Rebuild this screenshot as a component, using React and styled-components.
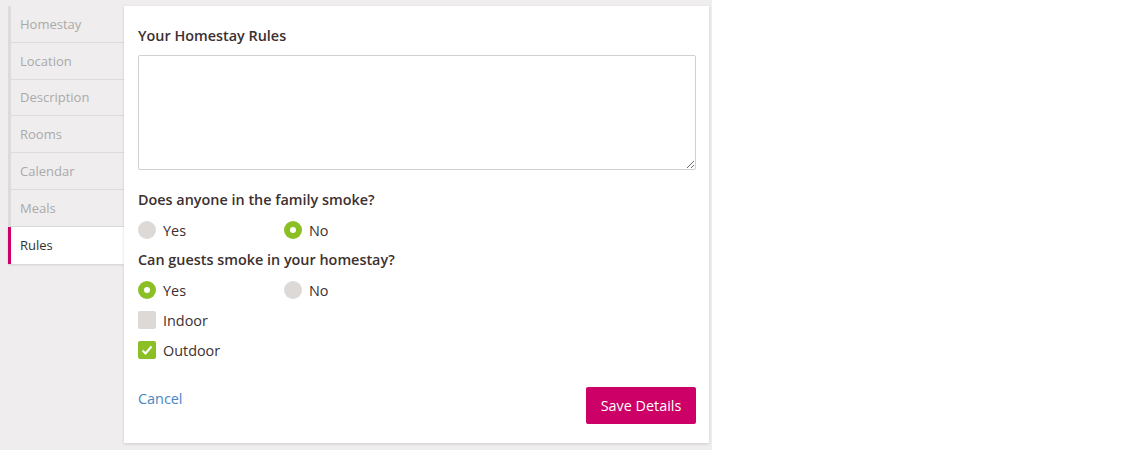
import styled, { createGlobalStyle } from "styled-components";

const GlobalStyle = createGlobalStyle`
  html, body {
    margin: 0;
    padding: 0;
    background: #fff;
    font-family: "Open Sans", "Liberation Sans", sans-serif;
  }
`;

const Page = styled.div`
  width: 712px;
  height: 450px;
  background: #efeded;
  box-sizing: border-box;
  padding: 6px 0 0 8px;
  display: flex;
  align-items: flex-start;
`;

const Tabs = styled.nav`
  width: 116px;
  display: flex;
  flex-direction: column;
`;

const Tab = styled.div`
  height: 36.8px;
  box-sizing: border-box;
  display: flex;
  align-items: center;
  padding-left: 9px;
  font-size: 13px;
  color: ${(p) => (p.$active ? "#333" : "#aaa")};
  background: ${(p) => (p.$active ? "#fff" : "#efeded")};
  border-left: 3px solid ${(p) => (p.$active ? "#cc0066" : "#dcdcdc")};
  border-bottom: ${(p) => (p.$active ? "none" : "1px solid #dcdcdc")};
  box-shadow: ${(p) => (p.$active ? "0 1px 2px rgba(0,0,0,0.12)" : "none")};
`;

const Panel = styled.section`
  width: 585px;
  height: 437px;
  box-sizing: border-box;
  background: #fff;
  box-shadow: 0 1px 3px rgba(0, 0, 0, 0.14);
  padding: 20px 13px 0 14px;
  display: flex;
  flex-direction: column;
`;

const Heading = styled.h3`
  margin: 0;
  font-size: 14.4px;
  font-weight: 600;
  color: #3c3030;
  line-height: 20px;
`;

const TextArea = styled.textarea`
  margin-top: 9px;
  width: 558px;
  height: 115px;
  box-sizing: border-box;
  border: 1px solid #d0d0d0;
  border-radius: 2px;
  resize: vertical;
  font-family: inherit;
`;

const Question = styled(Heading)`
  margin-top: ${(p) => p.$top || 20}px;
`;

const Row = styled.div`
  display: flex;
  margin-top: 10px;
  height: 20px;
  align-items: center;
`;

const Option = styled.label`
  width: 146px;
  display: flex;
  align-items: center;
  gap: 7px;
  font-size: 14.4px;
  color: #3c3030;
`;

const Radio = styled.span`
  width: 18px;
  height: 18px;
  border-radius: 50%;
  background: ${(p) => (p.$on ? "#8cbf26" : "#dcd9d7")};
  display: flex;
  align-items: center;
  justify-content: center;
  &::after {
    content: "";
    width: 6px;
    height: 6px;
    border-radius: 50%;
    background: #fff;
    display: ${(p) => (p.$on ? "block" : "none")};
  }
`;

const Box = styled.span`
  width: 18px;
  height: 18px;
  border-radius: 2px;
  background: ${(p) => (p.$on ? "#8cbf26" : "#dcd9d7")};
  display: flex;
  align-items: center;
  justify-content: center;
`;

const Footer = styled.div`
  margin-top: 27px;
  display: flex;
  justify-content: space-between;
  align-items: flex-start;
`;

const Cancel = styled.a`
  font-size: 14.4px;
  color: #4a86c5;
  margin-top: 2px;
  cursor: pointer;
`;

const SaveButton = styled.button`
  width: 110px;
  height: 37px;
  border: none;
  border-radius: 2px;
  background: #cc0066;
  color: #fff;
  font-family: inherit;
  font-size: 14.4px;
  cursor: pointer;
`;

const Check = () => (
  <svg width="12" height="12" viewBox="0 0 12 12">
    <path d="M1.5 6.5 L4.5 9.5 L10.5 2.5" fill="none" stroke="#fff" strokeWidth="2" />
  </svg>
);

const tabs = ["Homestay", "Location", "Description", "Rooms", "Calendar", "Meals", "Rules"];

export default function App() {
  return (
    <>
      <GlobalStyle />
      <Page>
        <Tabs>
          {tabs.map((t) => (
            <Tab key={t} $active={t === "Rules"}>
              {t}
            </Tab>
          ))}
        </Tabs>
        <Panel>
          <Heading>Your Homestay Rules</Heading>
          <TextArea />
          <Question $top={20}>Does anyone in the family smoke?</Question>
          <Row>
            <Option><Radio />Yes</Option>
            <Option><Radio $on />No</Option>
          </Row>
          <Question $top={10}>Can guests smoke in your homestay?</Question>
          <Row>
            <Option><Radio $on />Yes</Option>
            <Option><Radio />No</Option>
          </Row>
          <Row>
            <Option><Box />Indoor</Option>
          </Row>
          <Row>
            <Option><Box $on><Check /></Box>Outdoor</Option>
          </Row>
          <Footer>
            <Cancel>Cancel</Cancel>
            <SaveButton>Save Details</SaveButton>
          </Footer>
        </Panel>
      </Page>
    </>
  );
}
